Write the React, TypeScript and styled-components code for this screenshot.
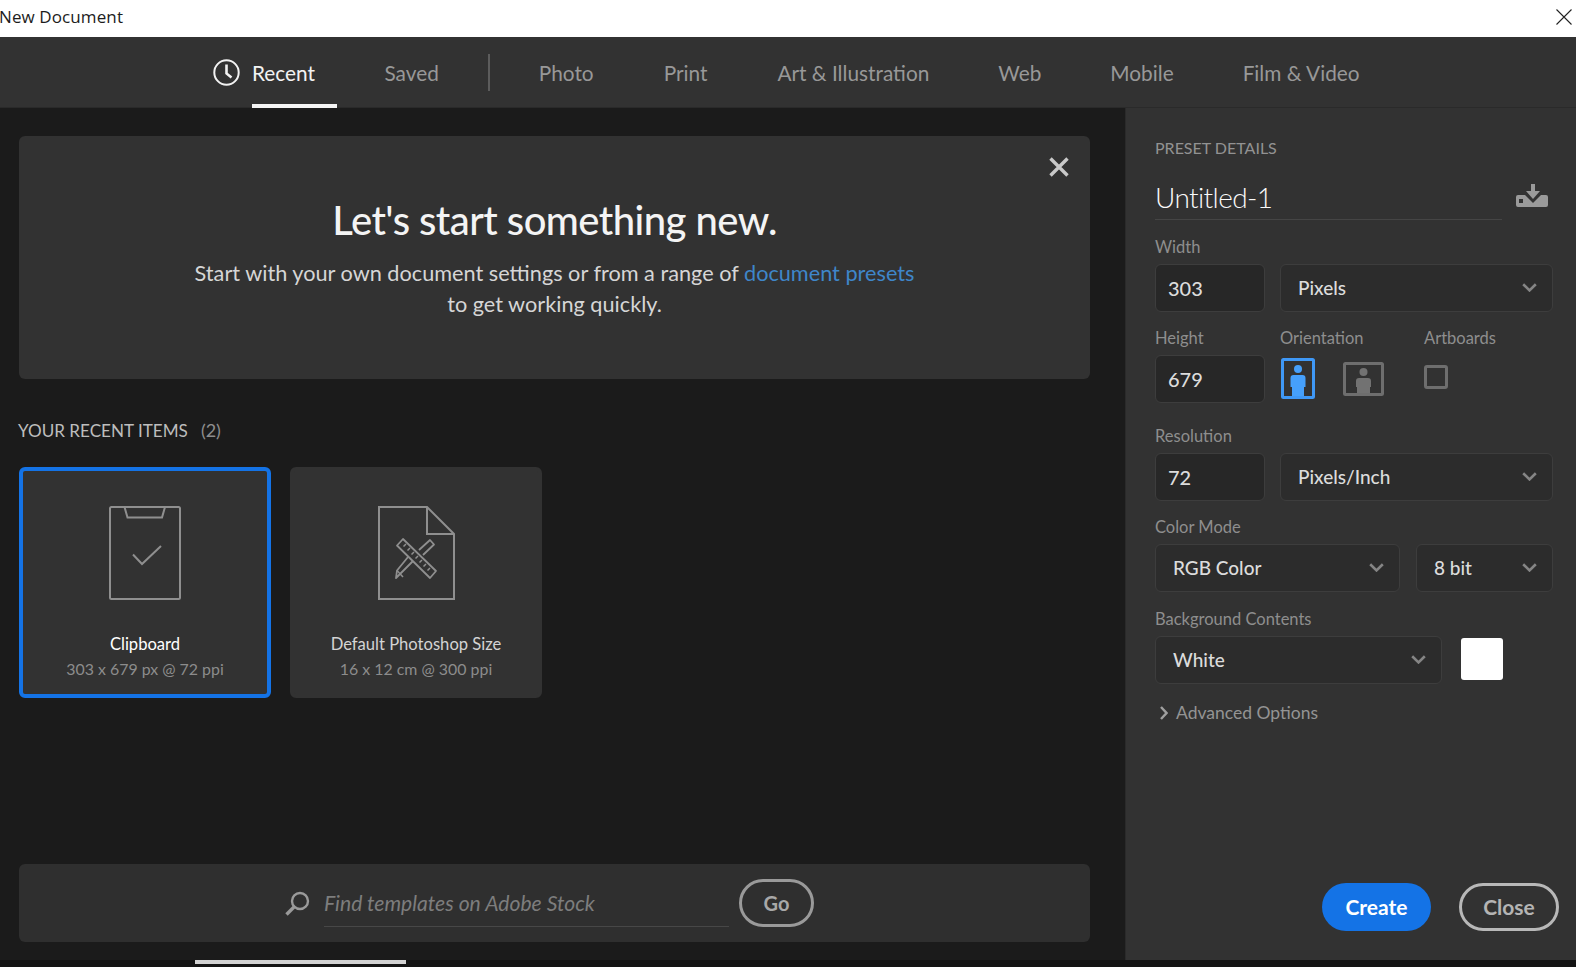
import React from "react";
import styled, { createGlobalStyle } from "styled-components";

const Global = createGlobalStyle`
  html, body { margin: 0; padding: 0; background: #141414; overflow: hidden; }
  * { box-sizing: border-box; }
`;

const FONT = `"Lato", "Open Sans", "Liberation Sans", sans-serif`;

const Page = styled.div`
  width: 1576px; height: 967px; display: flex; flex-direction: column;
  font-family: ${FONT}; background: #141414; overflow: hidden;
`;
const TitleBar = styled.header`
  height: 37px; flex: none; background: #fff; display: flex; align-items: center;
  justify-content: space-between; padding: 0 4px 4px 0;
`;
const TitleText = styled.span`
  font-family: "Open Sans", sans-serif; font-size: 17px; color: #1c1c1c; margin-left: -1px; letter-spacing: 0.1px;
`;
const TabBar = styled.nav`
  height: 71px; flex: none; background: #323232; display: flex; align-items: center;
  padding-left: 213px; border-bottom: 1px solid #2a2a2a;
`;
const Tab = styled.div<{ $active?: boolean; $gap?: number }>`
  position: relative; height: 100%; display: flex; align-items: center; gap: 12px; padding-top: 1px;
  font-size: 20.8px; color: ${(p) => (p.$active ? "#f2f2f2" : "#989898")};
  margin-right: ${(p) => p.$gap ?? 70}px;
`;
const TabClock = styled.svg`
  margin-top: -1px;
`;
const Underline = styled.span`
  position: absolute; left: 39px; right: -22px; bottom: -1px; height: 4px; background: #f5f5f5;
`;
const TabDivider = styled.span`
  width: 2px; height: 37px; background: #5c5c5c; margin-right: 49px;
`;
const Body = styled.div`
  height: 852px; flex: none; display: flex; background: #1b1b1b;
`;
const Main = styled.main`
  width: 1125px; flex: none; display: flex; flex-direction: column; padding: 28px 35px 18px 19px;
`;
const Hero = styled.section`
  position: relative; height: 243px; flex: none; background: #323232; border-radius: 6px;
  display: flex; flex-direction: column; align-items: center; padding-top: 59px;
`;
const HeroClose = styled.button`
  position: absolute; top: 20px; right: 20px; width: 22px; height: 22px; padding: 0; border: 0; background: none; display: flex;
`;
const HeroTitle = styled.h1`
  margin: 0; font-size: 40px; line-height: 50px; font-weight: 500; color: #f4f4f4; letter-spacing: -0.55px;
`;
const HeroText = styled.p`
  margin: 13px 0 0; font-size: 21.7px; line-height: 31.2px; color: #d6d6d6; text-align: center;
`;
const HeroLink = styled.span`
  color: #3f86c9;
`;
const SectionHead = styled.h2`
  margin: 42px 0 0 -1px; height: 20px; font-size: 17.1px; line-height: 20px; font-weight: 400; color: #bdbdbd;
`;
const SectionCount = styled.span`
  margin-left: 13px; font-size: 18px; line-height: 1; color: #8e8e8e;
`;
const CardRow = styled.div`
  display: flex; gap: 19px; margin-top: 26px;
`;
const Card = styled.article<{ $selected?: boolean }>`
  width: 252px; height: 231px; border-radius: 6px; background: #323232;
  border: ${(p) => (p.$selected ? "4px solid #1473e6" : "4px solid #323232")};
  display: flex; flex-direction: column; align-items: center; padding-top: 35px;
`;
const CardIcon = styled.svg`
  display: block; flex: none;
`;
const CardTitle = styled.div<{ $selected?: boolean }>`
  margin-top: 32px; font-size: 16.6px; line-height: 24px; color: ${(p) => (p.$selected ? "#fff" : "#d4d4d4")};
`;
const CardMeta = styled.div`
  margin-top: 1px; font-size: 15.9px; line-height: 24px; color: #8c8c8c;
`;
const SearchPanel = styled.section`
  margin-top: auto; height: 78px; flex: none; background: #2f2f2f; border-radius: 6px;
  display: flex; align-items: center; padding-left: 265px;
`;
const SearchField = styled.div`
  width: 405px; height: 48px; margin: 0 10px 0 14px; border-bottom: 1px solid #474747;
  display: flex; align-items: center; font-style: italic; font-size: 21.15px; color: #7d7d7d;
`;
const GoButton = styled.button`
  width: 75px; height: 48px; border-radius: 24px; border: 3px solid #9a9a9a; background: none;
  font-family: ${FONT}; font-weight: 700; font-size: 20px; color: #a8a8a8; padding: 0;
`;
const Aside = styled.aside`
  width: 451px; min-width: 0; flex: none; background: #323232; border-left: 1px solid #2a2a2a; display: flex; flex-direction: column;
  padding: 30px 23px 29px 29px;
`;
const PanelTitle = styled.div`
  font-size: 16px; line-height: 20px; color: #929292;
`;
const NameRow = styled.div`
  display: flex; align-items: center; margin-top: 12px; gap: 14px;
`;
const NameField = styled.div`
  width: 347px; height: 50px; border-bottom: 1px solid #454545; font-size: 28px; line-height: 54px; color: #fafafa; font-weight: 300; letter-spacing: -0.6px;
`;
const FieldLabel = styled.div<{ $top?: number }>`
  margin-top: ${(p) => p.$top ?? 0}px; margin-bottom: 7px; font-size: 16.5px; line-height: 20px; color: #8e8e8e;
`;
const Row = styled.div`
  display: flex; align-items: flex-start;
`;
const Column = styled.div<{ $w: number; $mt?: number }>`
  width: ${(p) => p.$w}px; flex: none; margin-top: ${(p) => p.$mt ?? 0}px;
`;
const NumberInput = styled.div`
  width: 110px; height: 48px; flex: none; background: #272727; border: 1px solid #3d3d3d; border-radius: 6px;
  display: flex; align-items: center; padding: 0 0 1px 12px; font-size: 20px; font-weight: 500; color: #dcdcdc;
`;
const Select = styled.div<{ $w?: number; $ml?: number }>`
  height: 48px; flex: ${(p) => (p.$w ? "none" : "1")}; width: ${(p) => (p.$w ? `${p.$w}px` : "auto")};
  margin-left: ${(p) => p.$ml ?? 15}px; background: #2c2c2c; border: 1px solid #3d3d3d; border-radius: 6px;
  display: flex; align-items: center; justify-content: space-between; padding: 0 15px 2px 17px;
  font-size: 19px; font-weight: 500; color: #dcdcdc;
`;
const Orientations = styled.div`
  height: 47px; display: flex; align-items: center; gap: 28px; margin-left: 1px;
`;
const Checkbox = styled.div`
  width: 24px; height: 24px; border: 3px solid #6e6e6e; border-radius: 3px; margin-bottom: 3px;
`;
const CheckboxSlot = styled.div`
  height: 47px; display: flex; align-items: center;
`;
const Swatch = styled.div`
  width: 42px; height: 42px; background: #fff; border-radius: 3px; margin: 2px 0 0 19px;
`;
const Advanced = styled.div`
  display: flex; align-items: center; gap: 8px; margin: 19px 0 0 5px; font-size: 17.5px; line-height: 20px; color: #949494;
`;
const Actions = styled.div`
  margin: auto -6px 0 0; display: flex; gap: 28px; padding-left: 167px;
`;
const PillButton = styled.button<{ $primary?: boolean }>`
  height: 48px; width: ${(p) => (p.$primary ? 109 : 100)}px; border-radius: 24px; padding: 0 0 2px;
  font-family: ${FONT}; font-weight: 700; font-size: 21px;
  background: ${(p) => (p.$primary ? "#1473e6" : "transparent")};
  color: ${(p) => (p.$primary ? "#fff" : "#b4b4b4")};
  border: ${(p) => (p.$primary ? "0" : "3px solid #b8b8b8")};
`;
const BottomStrip = styled.div`
  height: 7px; flex: none; background: #141414; padding-left: 195px;
`;
const ScrollThumb = styled.div`
  width: 211px; height: 4px; background: #d2d2d2;
`;

const Chevron = () => (
  <svg width="15" height="9" viewBox="0 0 15 9" fill="none">
    <path d="M1.2 1.2 L7.5 7.4 L13.8 1.2" stroke="#858585" strokeWidth="2.6" />
  </svg>
);

const ClipboardIcon = () => (
  <CardIcon width="72" height="94" viewBox="0 0 72 94" fill="none" stroke="#8f8f8f" strokeWidth="2">
    <rect x="1" y="1" width="70" height="92" rx="1.5" />
    <path d="M15.5 1 L18.5 11.5 H53 L56 1" />
    <path d="M24 48.5 L33 58 L52 40" />
  </CardIcon>
);

const DocIcon = () => (
  <CardIcon width="78" height="94" viewBox="0 0 78 94" fill="none" stroke="#8f8f8f" strokeWidth="2">
    <path d="M2 1 H50 L77 28 V93 H2 Z" />
    <path d="M50 1 V28 H77" />
    <path d="M20 39.5 L26 33 L59 65 L53 72 Z" strokeLinejoin="round" strokeWidth="1.8" />
    <path d="M29 38 L26.5 40.5 M33 42 L30.5 44.5 M37 46 L34.5 48.5 M41 50 L38.5 52.5 M45 54 L42.5 56.5 M49 58 L46.5 60.5 M53 62 L50.5 64.5" strokeWidth="1.5" />
    <path d="M42 44 L53 34 L57 38.5 L46 49 M36 55 L23 68 L19 72 L20 64.5 L31 51" strokeLinejoin="round" strokeWidth="1.8" />
    <path d="M20 64.5 L26 71" strokeWidth="1.5" />
  </CardIcon>
);

const Portrait = () => (
  <svg width="34" height="41" viewBox="0 0 34 41" fill="none">
    <rect x="1.5" y="1.5" width="31" height="38" rx="1" stroke="#3f98f6" strokeWidth="3" />
    <circle cx="17" cy="11" r="4" fill="#46a0fb" />
    <path d="M9.5 20 Q9.5 17 12.5 17 H21.5 Q24.5 17 24.5 20 V29 H23 V38 H11 V29 H9.5 Z" fill="#46a0fb" />
  </svg>
);

const Landscape = () => (
  <svg width="41" height="34" viewBox="0 0 41 34" fill="none">
    <rect x="1.5" y="1.5" width="38" height="31" rx="1" stroke="#6e6e6e" strokeWidth="3" />
    <circle cx="20.5" cy="10" r="4" fill="#727272" />
    <path d="M13 19 Q13 16 16 16 H25 Q28 16 28 19 V25 H27 V31 H14 V25 H13 Z" fill="#727272" />
  </svg>
);

const tabs: { label: string; gap: number }[] = [
  { label: "Photo", gap: 70 },
  { label: "Print", gap: 70 },
  { label: "Art & Illustration", gap: 69 },
  { label: "Web", gap: 69 },
  { label: "Mobile", gap: 69 },
  { label: "Film & Video", gap: 0 },
];

export default function App() {
  return (
    <Page>
      <Global />
      <TitleBar>
        <TitleText>New Document</TitleText>
        <svg width="16" height="16" viewBox="0 0 16 16" fill="none">
          <path d="M0.5 0.5 L15.5 15.5 M15.5 0.5 L0.5 15.5" stroke="#222" strokeWidth="1.1" />
        </svg>
      </TitleBar>
      <TabBar>
        <Tab $active $gap={69.5}>
          <TabClock width="27" height="27" viewBox="0 0 27 27" fill="none" stroke="#f2f2f2">
            <circle cx="13.5" cy="13.5" r="12.2" strokeWidth="2" />
            <path d="M13.5 5.5 V14.5 L18.5 18.5" strokeWidth="2.6" />
          </TabClock>
          Recent
          <Underline />
        </Tab>
        <Tab $gap={49}>Saved</Tab>
        <TabDivider />
        {tabs.map((t) => (
          <Tab key={t.label} $gap={t.gap}>
            {t.label}
          </Tab>
        ))}
      </TabBar>
      <Body>
        <Main>
          <Hero>
            <HeroClose aria-label="Dismiss">
              <svg width="22" height="22" viewBox="0 0 22 22" fill="none">
                <path d="M2.5 2.5 L19.5 19.5 M19.5 2.5 L2.5 19.5" stroke="#c9c9c9" strokeWidth="3.4" />
              </svg>
            </HeroClose>
            <HeroTitle>Let's start something new.</HeroTitle>
            <HeroText>
              Start with your own document settings or from a range of <HeroLink>document presets</HeroLink>
              <br />
              to get working quickly.
            </HeroText>
          </Hero>
          <SectionHead>
            YOUR RECENT ITEMS<SectionCount>(2)</SectionCount>
          </SectionHead>
          <CardRow>
            <Card $selected>
              <ClipboardIcon />
              <CardTitle $selected>Clipboard</CardTitle>
              <CardMeta>303 x 679 px @ 72 ppi</CardMeta>
            </Card>
            <Card>
              <DocIcon />
              <CardTitle>Default Photoshop Size</CardTitle>
              <CardMeta>16 x 12 cm @ 300 ppi</CardMeta>
            </Card>
          </CardRow>
          <SearchPanel>
            <svg width="26" height="25" viewBox="0 0 26 25" fill="none" stroke="#9a9a9a">
              <circle cx="16" cy="10" r="8" strokeWidth="2.4" />
              <path d="M10.5 15.5 L2.5 23.5" strokeWidth="3.4" />
            </svg>
            <SearchField>Find templates on Adobe Stock</SearchField>
            <GoButton>Go</GoButton>
          </SearchPanel>
        </Main>
        <Aside>
          <PanelTitle>PRESET DETAILS</PanelTitle>
          <NameRow>
            <NameField>Untitled-1</NameField>
            <svg width="32" height="23" viewBox="0 0 32 23">
              <path d="M2 11 H9 L17 19 L25 11 H30 Q32 11 32 13 V21 Q32 23 30 23 H2 Q0 23 0 21 V13 Q0 11 2 11 Z M3 15 V19 H7 V15 Z" fill="#9a9a9a" fillRule="evenodd" />
              <path d="M15 0 H19 V7 H24 L17 15 L10 7 H15 Z" fill="#9a9a9a" />
            </svg>
          </NameRow>
          <FieldLabel $top={17}>Width</FieldLabel>
          <Row>
            <NumberInput>303</NumberInput>
            <Select>
              Pixels
              <Chevron />
            </Select>
          </Row>
          <Row>
            <Column $w={125} $mt={16}>
              <FieldLabel>Height</FieldLabel>
              <NumberInput>679</NumberInput>
            </Column>
            <Column $w={144} $mt={16}>
              <FieldLabel>Orientation</FieldLabel>
              <Orientations>
                <Portrait />
                <Landscape />
              </Orientations>
            </Column>
            <Column $w={80} $mt={16}>
              <FieldLabel>Artboards</FieldLabel>
              <CheckboxSlot>
                <Checkbox />
              </CheckboxSlot>
            </Column>
          </Row>
          <FieldLabel $top={23}>Resolution</FieldLabel>
          <Row>
            <NumberInput>72</NumberInput>
            <Select>
              Pixels/Inch
              <Chevron />
            </Select>
          </Row>
          <FieldLabel $top={16}>Color Mode</FieldLabel>
          <Row>
            <Select $w={245} $ml={0}>
              RGB Color
              <Chevron />
            </Select>
            <Select $w={137} $ml={16}>
              8 bit
              <Chevron />
            </Select>
          </Row>
          <FieldLabel $top={17}>Background Contents</FieldLabel>
          <Row>
            <Select $w={287} $ml={0}>
              White
              <Chevron />
            </Select>
            <Swatch />
          </Row>
          <Advanced>
            <svg width="8" height="14" viewBox="0 0 8 14" fill="none">
              <path d="M1 1 L6.5 7 L1 13" stroke="#a0a0a0" strokeWidth="2.4" />
            </svg>
            Advanced Options
          </Advanced>
          <Actions>
            <PillButton $primary>Create</PillButton>
            <PillButton>Close</PillButton>
          </Actions>
        </Aside>
      </Body>
      <BottomStrip>
        <ScrollThumb />
      </BottomStrip>
    </Page>
  );
}
